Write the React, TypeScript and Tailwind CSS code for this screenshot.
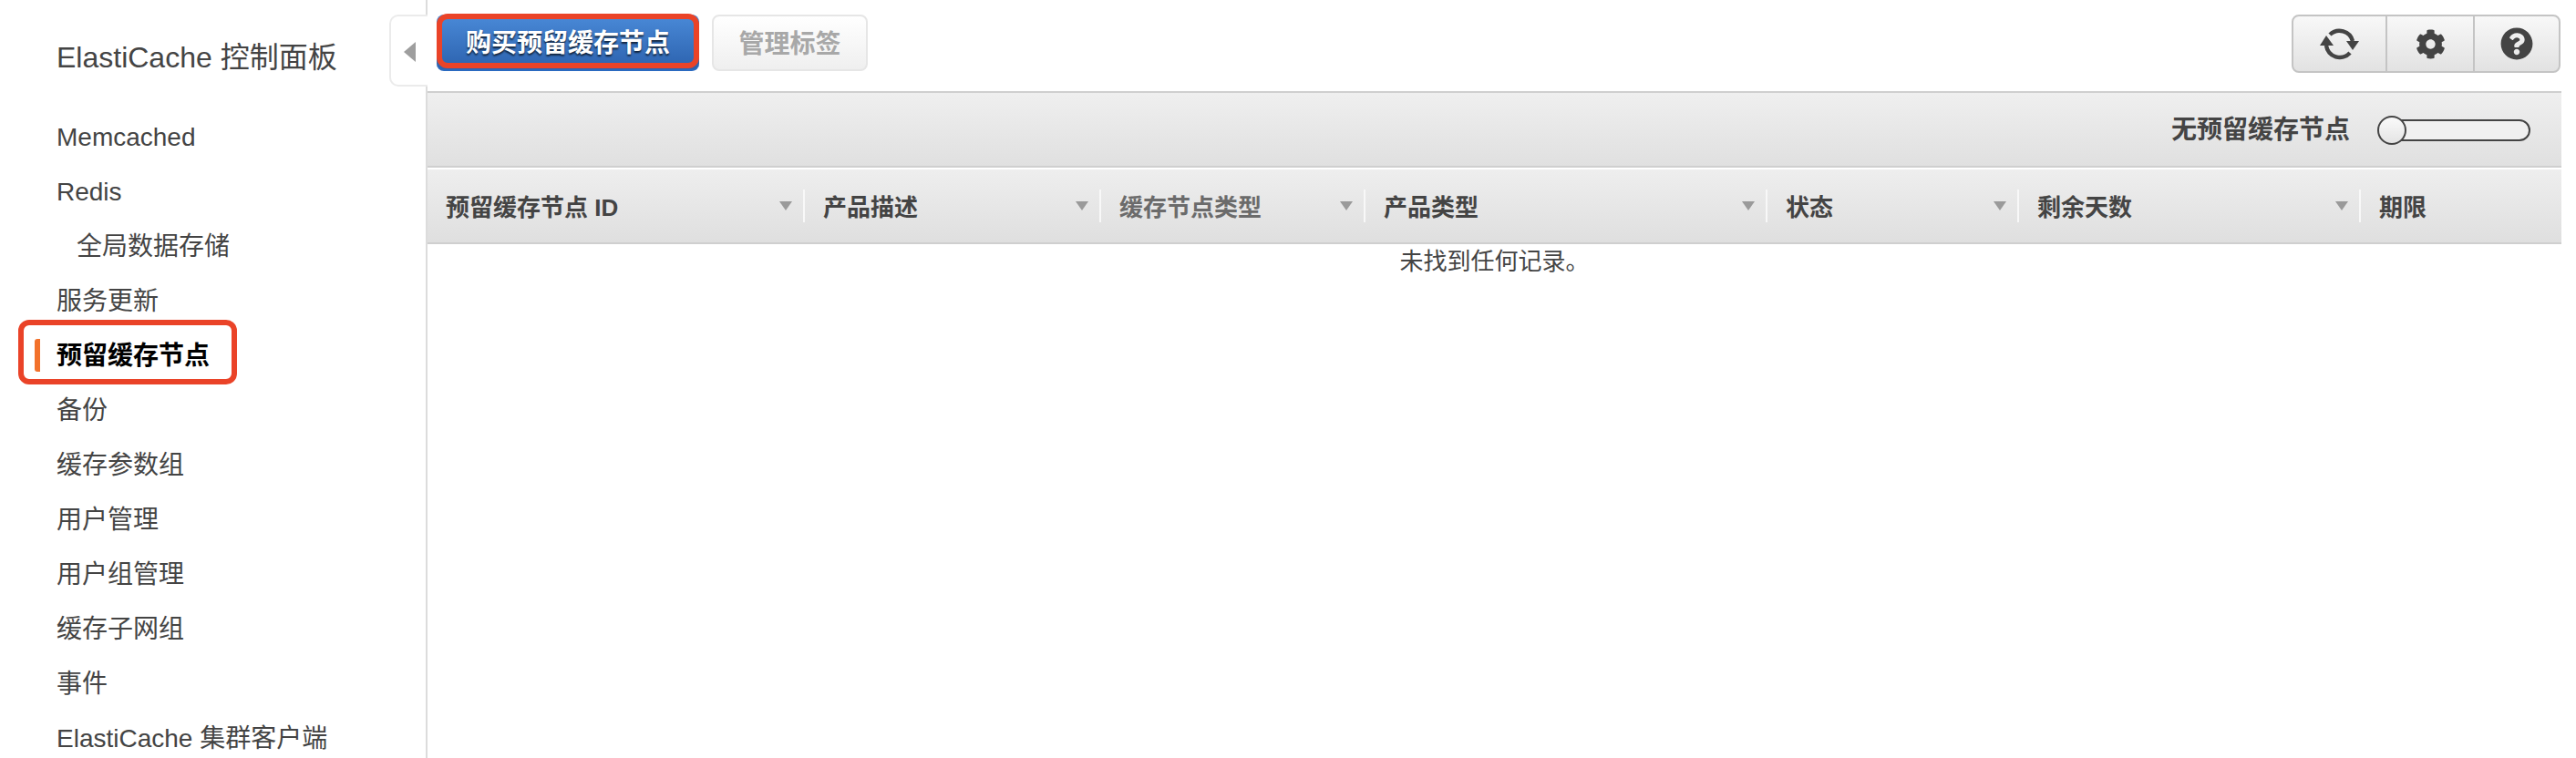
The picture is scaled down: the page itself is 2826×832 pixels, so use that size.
import React from "react";
import { FaCog, FaQuestionCircle } from "react-icons/fa";

const font = "font-['Liberation_Sans','Noto_Sans_CJK_SC',sans-serif]";

const nav = [
  { t: "Memcached" },
  { t: "Redis" },
  { t: "全局数据存储", sub: true },
  { t: "服务更新" },
  { t: "预留缓存节点", active: true },
  { t: "备份" },
  { t: "缓存参数组" },
  { t: "用户管理" },
  { t: "用户组管理" },
  { t: "缓存子网组" },
  { t: "事件" },
  { t: "ElastiCache 集群客户端" },
];

const cols = [
  { t: "预留缓存节点 ID", w: "w-[414px]", arrow: true },
  { t: "产品描述", w: "w-[325px]", arrow: true },
  { t: "缓存节点类型", w: "w-[290px]", arrow: true, dim: true },
  { t: "产品类型", w: "w-[441px]", arrow: true },
  { t: "状态", w: "w-[276px]", arrow: true },
  { t: "剩余天数", w: "w-[375px]", arrow: true },
  { t: "期限", w: "flex-1", arrow: false },
];

function Refresh() {
  return (
    <svg width="44" height="40" viewBox="0 0 44 40" fill="none">
      <path d="M36 17A15 15 0 0 0 11 10" stroke="#444" strokeWidth="4.5" />
      <path d="M7 22A15 15 0 0 0 33 30" stroke="#444" strokeWidth="4.5" />
      <path d="M7 11L0 22h15z" fill="#444" />
      <path d="M29 17h14l-7 10z" fill="#444" />
    </svg>
  );
}

export default function App() {
  return (
    <div className={`flex h-[832px] w-[2826px] overflow-hidden bg-white ${font} text-[#444]`}>
      <aside className="relative flex h-full w-[469px] shrink-0 flex-col border-r-2 border-[#dcdcdc] pl-[62px]">
        <div className="flex h-[120px] shrink-0 items-start pt-[47px] text-[32px] leading-none text-[#444]">
          ElastiCache 控制面板
        </div>
        {nav.map((n) => (
          <div
            key={n.t}
            className={`relative flex h-[60px] shrink-0 items-center whitespace-nowrap pt-[2px] text-[28px] leading-none ${n.sub ? "pl-[22px]" : ""} ${n.active ? "font-bold text-black" : ""}`}
          >
            {n.active && (
              <>
                <span className="absolute left-[-24px] top-[12px] h-[36px] w-[6px] rounded-l-[3px] bg-[#f2712b]" />
                <span className="absolute left-[-42px] top-[-9px] h-[71px] w-[240px] rounded-[12px] border-[6px] border-[#ea4328]" />
              </>
            )}
            {n.t}
          </div>
        ))}
        <div className="absolute right-[-2px] top-[16px] flex h-[79px] w-[42px] items-center rounded-l-[10px] border-2 border-r-0 border-[#ebebeb] bg-white pl-[13px] pt-[2px]">
          <svg width="14" height="24" viewBox="0 0 14 24"><path d="M14 1v22L1 12z" fill="#9e9e9e" /></svg>
        </div>
      </aside>

      <main className="flex h-full w-[2341px] shrink-0 flex-col">
        <div className="flex h-[100px] shrink-0 items-start pt-[16px] pl-[10px]">
          <button className="relative flex h-[62px] w-[288px] items-center justify-center rounded-[8px] border-b-2 border-[#2a6ac0] bg-gradient-to-b from-[#4a8ad8] to-[#2c62ae] pt-[4px] text-[28px] font-bold leading-none text-white [text-shadow:0_2px_2px_rgba(0,0,0,0.7)]">
            购买预留缓存节点
            <span className="absolute -top-px left-0 h-[60px] w-[288px] rounded-[12px] border-[6px] border-[#ea4328]" />
          </button>
          <button className="ml-[14px] flex h-[62px] w-[171px] items-center justify-center rounded-[8px] border-2 border-[#e6e6e6] bg-gradient-to-b from-white to-[#efefef] pt-[4px] text-[28px] font-bold leading-none text-[#a8a8a8]">
            管理标签
          </button>
          <div className="ml-auto mr-px flex h-[64px] w-[295px] overflow-hidden rounded-[8px] border-2 border-[#c4c4c4] bg-gradient-to-b from-[#f8f8f8] to-[#e2e2e2]">
            <div className="flex w-[103px] items-center justify-center border-r-2 border-[#c4c4c4]"><Refresh /></div>
            <div className="flex w-[96px] items-center justify-center border-r-2 border-[#c4c4c4] text-[33px] text-[#444]"><FaCog /></div>
            <div className="flex flex-1 items-center justify-center text-[36px] text-[#444]"><FaQuestionCircle /></div>
          </div>
        </div>

        <div className="flex h-[84px] shrink-0 items-center justify-end border-y-2 border-[#cfcfcf] bg-gradient-to-b from-[#efefef] to-[#e0e0e0] pr-[34px] pt-[2px]">
          <span className="mr-[31px] text-[28px] font-bold leading-none">无预留缓存节点</span>
          <div className="relative h-[24px] w-[167px] rounded-[12px] border-2 border-[#444] bg-[#f0f0f0]">
            <span className="absolute left-[-3px] top-[-6px] h-[32px] w-[32px] rounded-full border-2 border-[#444] bg-gradient-to-b from-[#fafafa] to-[#e4e4e4]" />
          </div>
        </div>

        <div className="mt-[2px] flex h-[82px] shrink-0 items-center border-b-2 border-[#cfcfcf] bg-gradient-to-b from-[#eeeeee] to-[#dfdfdf]">
          {cols.map((c) => (
            <div key={c.t} className={`${c.w} flex h-full items-center`}>
              <div className="flex h-[36px] w-full items-center pl-[20px] pr-[12px]">
                <span className={`pt-[3px] text-[26px] font-bold leading-none whitespace-nowrap ${c.dim ? "text-[#6b6b6b]" : "text-[#444]"}`}>{c.t}</span>
                {c.arrow && (
                  <svg className="ml-auto" width="14" height="10" viewBox="0 0 14 10"><path d="M0 0h14L7 10z" fill="#9a9a9a" /></svg>
                )}
              </div>
              {c.arrow && <span className="h-[36px] w-[2px] shrink-0 bg-[#f8f8f8]" />}
            </div>
          ))}
        </div>

        <div className="flex h-[38px] shrink-0 items-center justify-center text-[26px] leading-none text-[#444]">未找到任何记录。</div>
      </main>
    </div>
  );
}
